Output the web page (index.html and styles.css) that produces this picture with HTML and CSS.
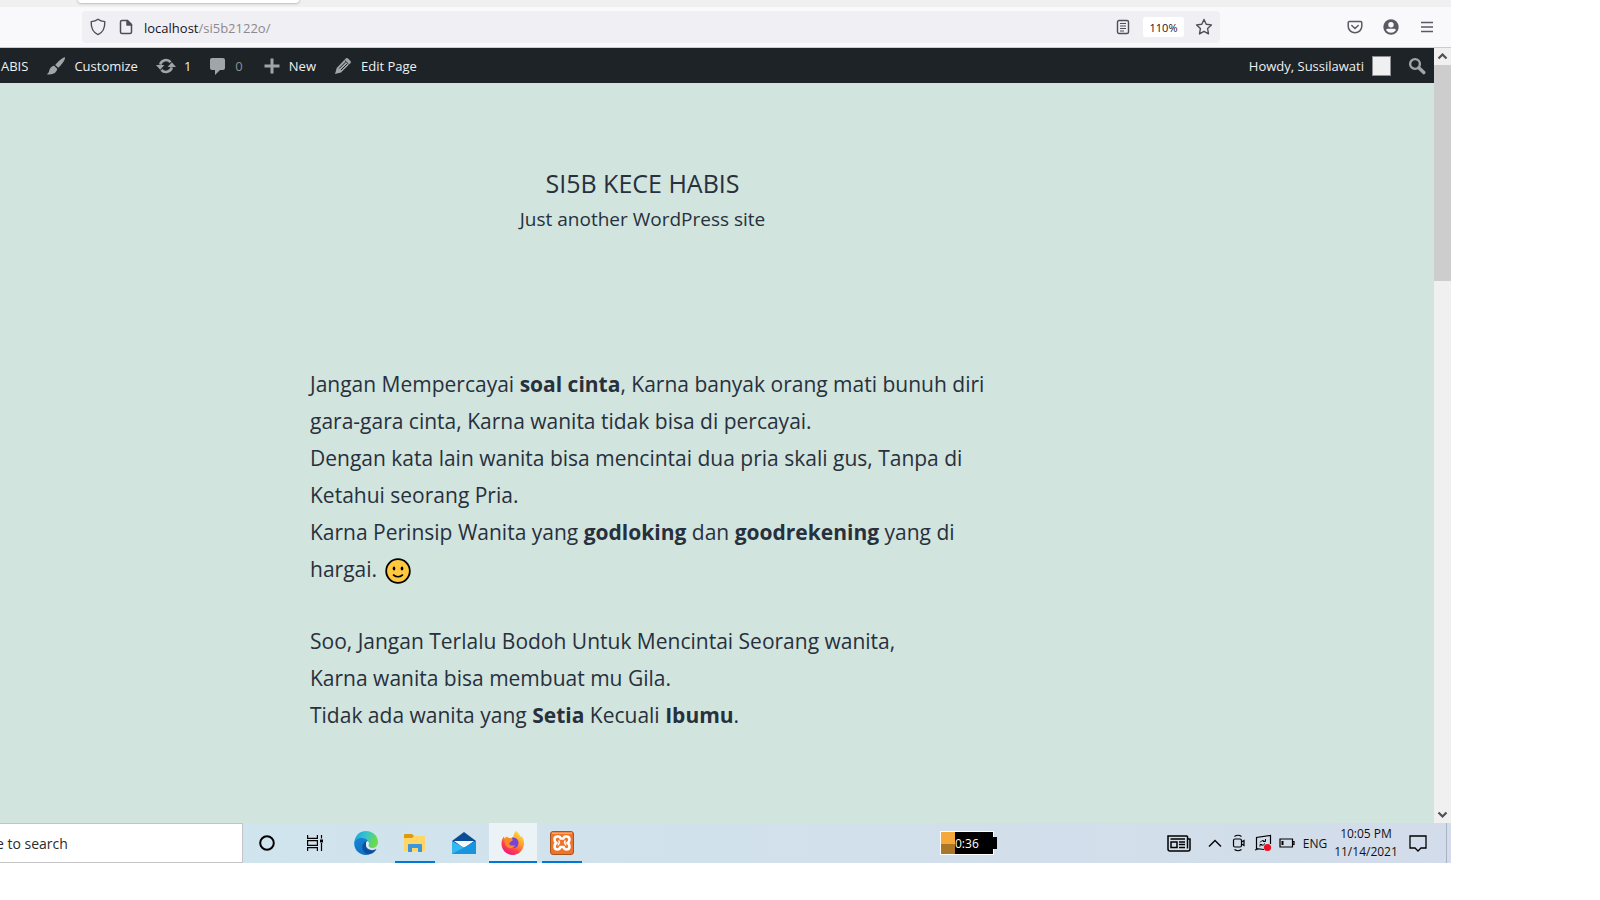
FILE: index.html
```html
<!DOCTYPE html>
<html lang="id">
<head>
<meta charset="utf-8">
<title>SI5B KECE HABIS</title>
<link rel="stylesheet" href="styles.css">
</head>
<body>
<div class="desktop">
  <div class="tabstrip"><div class="tab"></div></div>
  <div class="toolbar">
    <div class="urlbar">
      <button class="ico" aria-label="Tracking protection"><svg width="16" height="18" viewBox="0 0 16 18" fill="none" stroke="#4f4e58" stroke-width="1.4" stroke-linejoin="round"><path d="M8 1.2C6 2.8 3.6 3.4 1.2 3.6 1 8.600 2 14 8 16.600 14 14 15 8.600 14.800 3.600 12.400 3.400 10 2.800 8 1.200Z"/></svg></button>
      <button class="ico" aria-label="Site information"><svg width="14" height="16" viewBox="0 0 14 16" fill="none" stroke="#4f4e58" stroke-width="1.500" stroke-linejoin="round"><path d="M3 1.500H8.500L12.500 5.500V13Q12.500 14.500 11 14.500H3Q1.500 14.500 1.500 13V3Q1.500 1.500 3 1.500Z"/><path d="M8 1.500V6H12.500Z" fill="#4f4e58"/></svg></button>
      <div class="url"><b>localhost</b>/si5b2122o/</div>
      <button class="ico" aria-label="Reader view"><svg width="14" height="16" viewBox="0 0 14 16" fill="none" stroke="#4f4e58" stroke-width="1.400"><rect x="1.500" y="1.500" width="11" height="13" rx="1.500"/><path d="M4 4.500H10M4 7H10M4 9.500H10M4 12H8" stroke-width="1.100"/></svg></button>
      <button class="zoom">110%</button>
      <button class="ico" aria-label="Bookmark"><svg width="18" height="18" viewBox="0 0 18 18" fill="none" stroke="#4f4e58" stroke-width="1.400" stroke-linejoin="round"><path d="M9 1.500 11.200 6.200 16.400 6.900 12.600 10.500 13.500 15.900 9 13.300 4.500 15.900 5.400 10.500 1.600 6.900 6.800 6.200Z"/></svg></button>
    </div>
    <div class="tools">
      <button class="ico" aria-label="Pocket"><svg width="16" height="16" viewBox="0 0 16 16" fill="none" stroke="#5b5a64" stroke-width="1.500" stroke-linecap="round" stroke-linejoin="round"><path d="M2.500 2.500H13.500Q14.800 2.500 14.800 3.800V7.200A6.800 6.600 0 0 1 1.200 7.200V3.800Q1.200 2.500 2.500 2.500Z"/><path d="M4.800 6.500 8 9.500 11.200 6.500"/></svg></button>
      <button class="ico" aria-label="Account"><svg width="16" height="16" viewBox="0 0 16 16"><circle cx="8" cy="8" r="7.700" fill="#5b5a64"/><circle cx="8" cy="5.800" r="2.700" fill="#f9f9fb"/><path d="M3.200 11.200Q3.200 9.800 4.800 9.800H11.200Q12.800 9.800 12.800 11.200 11 13.800 8 13.800T3.200 11.200Z" fill="#f9f9fb"/></svg></button>
      <button class="ico" aria-label="Menu"><svg width="14" height="14" viewBox="0 0 14 14" stroke="#5b5a64" stroke-width="1.300"><path d="M1 2.500H13M1 7H13M1 11.500H13"/></svg></button>
    </div>
  </div>
  <div class="viewport">
    <div class="page">
      <nav class="adminbar">
        <a href="#" class="first">ABIS</a>
        <a href="#"><svg width="20" height="20" viewBox="0 0 20 20" fill="#a0a5aa"><path d="M19 1.200C19.500 3 17 7.200 12.300 11.800L9.200 9C12.500 5 17 1 19 1.200ZM8.200 9.800 11.200 12.800C10.800 17 6.500 19.200.8 18.200 3 17.200 2.800 15.800 3.600 13.600 4.400 11.400 6.200 10 8.200 9.800Z"/></svg>Customize</a>
        <a href="#" class="count"><svg width="20" height="18" viewBox="0 0 20 18"><g fill="none" stroke="#a0a5aa" stroke-width="2.600"><path d="M4.200 7.600A6 6 0 0 1 14.600 5.200"/><path d="M15.800 10.400A6 6 0 0 1 5.400 12.800"/></g><path d="M0 8H8.400L4.200 12.800ZM11.600 10H20L15.800 5.200Z" fill="#a0a5aa"/></svg>1</a>
        <a href="#" class="count dim"><svg width="18" height="20" viewBox="0 0 18 20" fill="#a0a5aa"><path d="M3 2H14Q16 2 16 4V12Q16 14 14 14H11L6 19V14H3Q1 14 1 12V4Q1 2 3 2Z"/></svg>0</a>
        <a href="#" class="new"><svg width="16" height="16" viewBox="0 0 16 16" stroke="#a0a5aa" stroke-width="3"><path d="M8 .5V15.500M.5 8H15.500"/></svg>New</a>
        <a href="#" class="edit"><svg width="18" height="18" viewBox="0 0 18 18"><path d="M12 1.200Q13 .6 14 1.500L16.500 4Q17.300 5 16.600 6L7 15.500 1 17 2.700 11Z" fill="#a0a5aa"/><path d="M5.200 11.500 11.500 5.200M7 13 13 7M10.800 3.500 14.500 7.200" stroke="#1d2327" fill="none"/></svg>Edit Page</a>
        <a href="#" class="howdy">Howdy, Sussilawati<span class="avatar"></span></a>
        <a href="#" class="search" aria-label="Search"><svg width="18" height="18" viewBox="0 0 18 18" fill="none" stroke="#a0a5aa"><circle cx="7" cy="7" r="4.900" stroke-width="2.400"/><path d="M10.800 10.800 15.800 15.600" stroke-width="3.400" stroke-linecap="round"/></svg></a>
      </nav>
      <main class="content">
        <header class="site">
          <h1>SI5B KECE HABIS</h1>
          <p>Just another WordPress site</p>
        </header>
        <article class="entry">
          <p>Jangan Mempercayai <strong>soal cinta</strong>, Karna banyak orang mati bunuh diri<br>gara-gara cinta, Karna wanita tidak bisa di percayai.<br>Dengan kata lain wanita bisa mencintai dua pria skali gus, Tanpa di<br>Ketahui seorang Pria.<br>Karna Perinsip Wanita yang <strong>godloking</strong> dan <strong>goodrekening</strong> yang di<br>hargai. <svg class="smile" width="26" height="26" viewBox="0 0 26 26"><circle cx="13" cy="13" r="11.800" fill="#ffc83d" stroke="#000" stroke-width="1.800"/><ellipse cx="9" cy="10.500" rx="1.300" ry="2"/><ellipse cx="17" cy="10.500" rx="1.300" ry="2"/><path d="M8.500 17Q13 20.500 17.500 17" fill="none" stroke="#000" stroke-width="1.600" stroke-linecap="round"/></svg></p>
          <p>Soo, Jangan Terlalu Bodoh Untuk Mencintai Seorang wanita,<br>Karna wanita bisa membuat mu Gila.<br>Tidak ada wanita yang <strong>Setia</strong> Kecuali <strong>Ibumu</strong>.</p>
        </article>
      </main>
    </div>
    <div class="scrollbar">
      <button aria-label="Scroll up"><svg width="11" height="8" viewBox="0 0 11 8" fill="none" stroke="#505050" stroke-width="2.200"><path d="M1.500 5.500 5.500 1.500 9.500 5.500"/></svg></button>
      <div class="thumb"></div>
      <button aria-label="Scroll down"><svg width="11" height="8" viewBox="0 0 11 8" fill="none" stroke="#505050" stroke-width="2.200"><path d="M1.500 1.500 5.500 5.500 9.500 1.500"/></svg></button>
    </div>
  </div>
  <footer class="taskbar">
    <button class="find">e to search</button>
    <button class="app" aria-label="Cortana"><svg width="18" height="18" viewBox="0 0 18 18"><circle cx="9" cy="9" r="6.800" fill="none" stroke="#000" stroke-width="2"/></svg></button>
    <button class="app" aria-label="Task view"><svg width="18" height="16" viewBox="0 0 18 16" fill="none" stroke="#000" stroke-width="1.200"><path d="M1.600 0V3.400H11.400V0M1.600 16V12.600H11.400V16M1.600 5.600H11.400V10.400H1.600ZM15.500 0V3.500M15.500 8V16"/><rect x="14" y="4.500" width="3" height="3" fill="#000" stroke="none"/></svg></button>
    <div class="apps">
      <button class="app" aria-label="Edge"><svg width="24" height="24" viewBox="0 0 24 24"><defs><linearGradient id="e1" x1="0" y1="0" x2="1" y2=".3"><stop offset="0" stop-color="#1d9ed9"/><stop offset=".5" stop-color="#36c3d0"/><stop offset="1" stop-color="#6bdc4c"/></linearGradient><linearGradient id="e2" x1="0" y1="0" x2=".6" y2="1"><stop offset="0" stop-color="#1487d4"/><stop offset="1" stop-color="#0f6fc5"/></linearGradient></defs><path d="M.5 10C1.500 4 6 0 12 0 19 0 24 5 24 11 24 15 21 17 18 17 15 17 14 15.500 14.500 14 15.500 11 13 7.500 9 7.500 5 7.500 2 9 .5 12Z" fill="url(#e1)"/><path d="M.2 13C0 9 4 7 8 7 11 7 13.500 8.500 14.300 10.500 11 9.500 8.500 12.500 9 16 9.500 20 13 23 16 23.200 8 26 .5 20.500.2 13Z" fill="url(#e2)"/><path d="M10 11.500C7.500 14 7.500 20 12.500 22.800 17 24.500 21 21 22.500 18 18 20.500 13 18.500 12.200 15.500 11.700 13.500 12 11.500 13 10.300 11.500 10.200 10.500 11 10 11.500Z" fill="#0d4f9d"/><path d="M12.200 12C12.500 10.500 14 10 14.700 11.500 15 13 14.300 13.500 14.300 14.500 14.300 16.500 16.500 17.200 18 17.200 14.500 18.500 11.600 15.500 12.200 12Z" fill="#e4f1f7"/></svg></button>
      <button class="app open" aria-label="File Explorer"><svg width="22" height="20" viewBox="0 0 22 20"><path d="M0 2Q0 1 1 1H8L10 3V6H0Z" fill="#dc9a0c"/><path d="M0 5H8L10 3H20Q21 3 21 4V17Q21 18 20 18H1Q0 18 0 17Z" fill="#ffd666"/><path d="M4 19V12Q4 11 5 11H17Q18 11 18 12V19H14V15H8V19Z" fill="#3a96dd"/></svg></button>
      <button class="app" aria-label="Mail"><svg width="24" height="24" viewBox="0 0 24 24"><path d="M0 10 12 1 24 10V22H0Z" fill="#0a4d96"/><path d="M2 10H22L12 17Z" fill="#fff"/><path d="M0 10 12 16.500 24 10V23H0Z" fill="#35b8f1"/><path d="M3 10H21L12 15Z" fill="#f5f5f5"/><path d="M0 23 24 10V23Z" fill="#1795de"/></svg></button>
      <button class="app open active" aria-label="Firefox"><svg width="24" height="24" viewBox="0 0 24 24"><defs><linearGradient id="f1" x1=".8" y1="0" x2=".2" y2="1"><stop offset="0" stop-color="#ffe744"/><stop offset=".4" stop-color="#ff9a28"/><stop offset=".7" stop-color="#ff4050"/><stop offset="1" stop-color="#e31587"/></linearGradient></defs><path d="M15 0C17 1 19 4 19.500 6L20.500 5C23 8 24 13 22 17 19.500 22 15.500 24 12 24 5 24 .5 18.500.5 12.500.5 9.500 1.500 7 3 5.500L3.500 8 5.500 5.500 8 7C10 7 12 6.500 12.500 6 12.500 3 13.500 1 15 0Z" fill="url(#f1)"/><path d="M11 6.500C15 6 18 9 17.500 12.500 17 16.500 13 18 10 16.500 7 15 7 12.500 8 11L11.500 9Z" fill="#7544d8"/><path d="M3.500 7 8 7 12 9 9.500 11 8 12.500C9 15 12 15 14 14 13 18 8 18 6 16 3.500 13.500 3.500 10 3.500 7Z" fill="#ff8a20"/></svg></button>
      <button class="app open" aria-label="XAMPP"><svg width="24" height="24" viewBox="0 0 24 24"><rect x=".5" y=".5" width="23" height="23" rx="2.500" fill="#ee742b" stroke="#a85420"/><path d="M2 1.500H22V3H2Z" fill="#f6a673"/><g fill="none" stroke="#fff" stroke-width="2.600" stroke-linejoin="round"><path d="M7.500 5.500H9Q10 5.500 10.500 7.500H13.500Q14 5.500 15 5.500H16.500Q19.500 5.500 19.500 8.500 19.500 11 17.500 12 19.500 13 19.500 15.500 19.500 18.500 16.500 18.500 14.500 18.500 13.500 16H10.500Q9.500 18.500 7.500 18.500 4.500 18.500 4.500 15.500 4.500 13 6.500 12 4.500 11 4.500 8.500 4.500 5.500 7.500 5.500Z"/><path d="M8.500 9.500Q10 10.500 9 12.500 8 14 8.500 14.500M15.500 9.500Q14 10.500 15 12.500 16 14 15.500 14.500" stroke-width="1.500"/></g></svg></button>
    </div>
    <div class="battery"><span>0:36</span></div>
    <div class="tray">
      <button class="news" aria-label="News"><svg width="24" height="17" viewBox="0 0 24 17" fill="none" stroke="#000" stroke-width="1.500"><path d="M20.500 1H1V14Q1 16 3 16H21Q23 16 23 14V4H20.500V13.500M20.500 1V13.500"/><rect x="4" y="7" width="6" height="5.500"/><path d="M3.500 4H18M12 7H18M12 9.500H18M12 12.500H18" stroke-width="1.300"/></svg></button>
      <button aria-label="Hidden icons"><svg width="14" height="9" viewBox="0 0 14 9" fill="none" stroke="#000" stroke-width="1.400"><path d="M1 7.500 7 1.500 13 7.500"/></svg></button>
      <button aria-label="Meet Now"><svg width="14" height="18" viewBox="0 0 14 18" fill="none" stroke="#000" stroke-width="1.200"><rect x="1.500" y="5" width="8" height="8" rx="1.500"/><path d="M9.500 8 12 6.500V11.500L9.500 10M2.500 2.500Q6 0 9.500 2.500M2.500 15.500Q6 18 9.500 15.500"/></svg></button>
      <button aria-label="Update"><svg width="18" height="18" viewBox="0 0 18 18" fill="none" stroke="#000" stroke-width="1.200"><path d="M10 15.500 2.500 14.500V3.500L16.500 1.500V10M4.500 15 1 16"/><path d="M6 8.500Q7.500 5.500 10.500 7M11.500 5V7.500H9M11 9.500Q9.500 12 7 11M6 12.500V10.500H8" stroke-width="1"/><circle cx="13.500" cy="13.500" r="3.600" fill="#e81123" stroke="none"/></svg></button>
      <button aria-label="Battery"><svg width="16" height="10" viewBox="0 0 16 10" fill="none" stroke="#000" stroke-width="1.200"><path d="M1 1H13.500V9H1ZM13.500 3.500H15V6.500H13.500"/><path d="M3.500 3V7" stroke-width="2"/></svg></button>
      <button class="lang">ENG</button>
      <button class="clock"><span>10:05 PM</span><span>11/14/2021</span></button>
      <button class="note" aria-label="Notifications"><svg width="18" height="17" viewBox="0 0 18 17" fill="none" stroke="#000" stroke-width="1.300"><path d="M1 1H17V13H12L9 16 6 13H1Z"/></svg></button>
    </div>
  </footer>
</div>
</body>
</html>
```
FILE: styles.css
```css
* { box-sizing: border-box; }
body { margin: 0; background: #fff; font-family: "Open Sans", "Noto Sans", sans-serif; }
button { border: 0; padding: 0; margin: 0; background: none; font: inherit; color: inherit; display: flex; align-items: center; justify-content: center; flex: none; }
svg { display: block; flex: none; }
.desktop { height: 100vh; padding: 0 149px 37px 0; display: flex; flex-direction: column; overflow: hidden; }

.tabstrip { height: 7px; background: #f0f0f0; padding-left: 78px; flex: none; }
.tab { width: 221px; height: 3px; background: #fff; border-radius: 0 0 4px 4px; box-shadow: 0 0 3px #888; }
.toolbar { height: 41px; background: #f9f9fb; border-bottom: 1px solid #ccc; display: flex; align-items: center; padding-left: 82px; flex: none; }
.urlbar { flex: 1; height: 32px; background: #f0eff4; border-radius: 4px; display: flex; align-items: center; padding: 0 4px; }
.ico { width: 24px; height: 24px; }
.urlbar .ico + .ico { margin-left: 4px; }
.url { flex: 1; font-size: 13px; line-height: 18px; padding-top: 2px; color: #8a8a90; margin-left: 6px; }
.url b { font-weight: 400; color: #15141a; }
.zoom { width: 41px; height: 20px; background: #fff; border-radius: 3px; font-size: 11px; color: #15141a; margin: 0 8px; }
.tools { display: flex; gap: 12px; margin: 0 12px 0 123px; }

.viewport { flex: 1; display: flex; min-height: 0; }
.page { flex: 1; display: flex; flex-direction: column; background: #d1e4dd; min-width: 0; }
.adminbar { height: 35px; flex: none; background: #1d2327; display: flex; align-items: center; font-size: 13px; }
.adminbar a { display: flex; align-items: center; gap: 8px; color: #f0f0f1; text-decoration: none; margin-left: 18px; }
.adminbar .first { margin-left: 1px; }
.adminbar .dim { color: #8c9196; }
.adminbar .new { margin-left: 21px; gap: 9px; }
.adminbar .edit { gap: 9px; }
.adminbar .howdy { margin-left: auto; }
.adminbar .search { margin: 0 8px 0 17px; }
.avatar { width: 19px; height: 20px; background: #f0f0f0; border: 1px solid #8c8f94; }
.content { padding: 83px 149px 0 0; color: #28303d; }
.site { text-align: center; }
.site h1 { margin: 0; font-size: 25px; font-weight: 400; line-height: 35px; }
.site p { margin: 0; font-size: 19px; line-height: 37px; }
.entry { width: 671px; margin: 128px auto 0; font-size: 21px; line-height: 37px; white-space: nowrap; }
.entry p { margin: 0 0 35px; padding-left: 3px; }
.smile { display: inline-block; vertical-align: -7px; margin-left: 3px; }
.scrollbar { width: 17px; background: #f0f0f0; display: flex; flex-direction: column; flex: none; }
.scrollbar button { height: 17px; width: 100%; }
.thumb { height: 216px; background: #cdcdcd; margin-bottom: auto; }

.taskbar { height: 40px; flex: none; display: flex; align-items: center; background: linear-gradient(90deg, #d0e6ef, #d1e2ec 40%, #d3dcea); color: #111; }
.find { width: 243px; height: 40px; background: #fff; border: 1px solid #c4c4c4; border-left: 0; justify-content: flex-start; font-size: 14px; color: #2b2b2b; text-indent: -4px; overflow: hidden; }
.app { width: 48px; height: 40px; }
.apps { display: flex; gap: 1px; margin-left: 3px; }
.open { background: linear-gradient(#0078d7, #0078d7) center bottom / 40px 2px no-repeat; }
.active { background-color: #ebf3f7; background-size: 48px 2px; }
.battery { width: 54px; height: 24px; margin-left: auto; border: 1px solid #fff; background: linear-gradient(transparent 55%, rgba(0, 0, 0, .3) 55%), linear-gradient(90deg, #f5a93a 14px, #000 14px); color: #fff; font-size: 12px; display: flex; align-items: center; padding-left: 14px; }
.battery::after { content: ""; width: 4px; height: 12px; background: #000; margin-left: auto; margin-right: -4px; flex: none; }
.tray { display: flex; align-items: center; height: 40px; margin-left: 161px; padding-right: 11px; border-right: 1px solid #a8b2c0; margin-right: 4px; }
.tray button { width: 24px; height: 40px; font-size: 12px; }
.tray .news { width: 48px; }
.tray .lang { width: 32px; }
.tray .clock { width: 70px; flex-direction: column; line-height: 18px; }
.tray .note { width: 34px; }
```
